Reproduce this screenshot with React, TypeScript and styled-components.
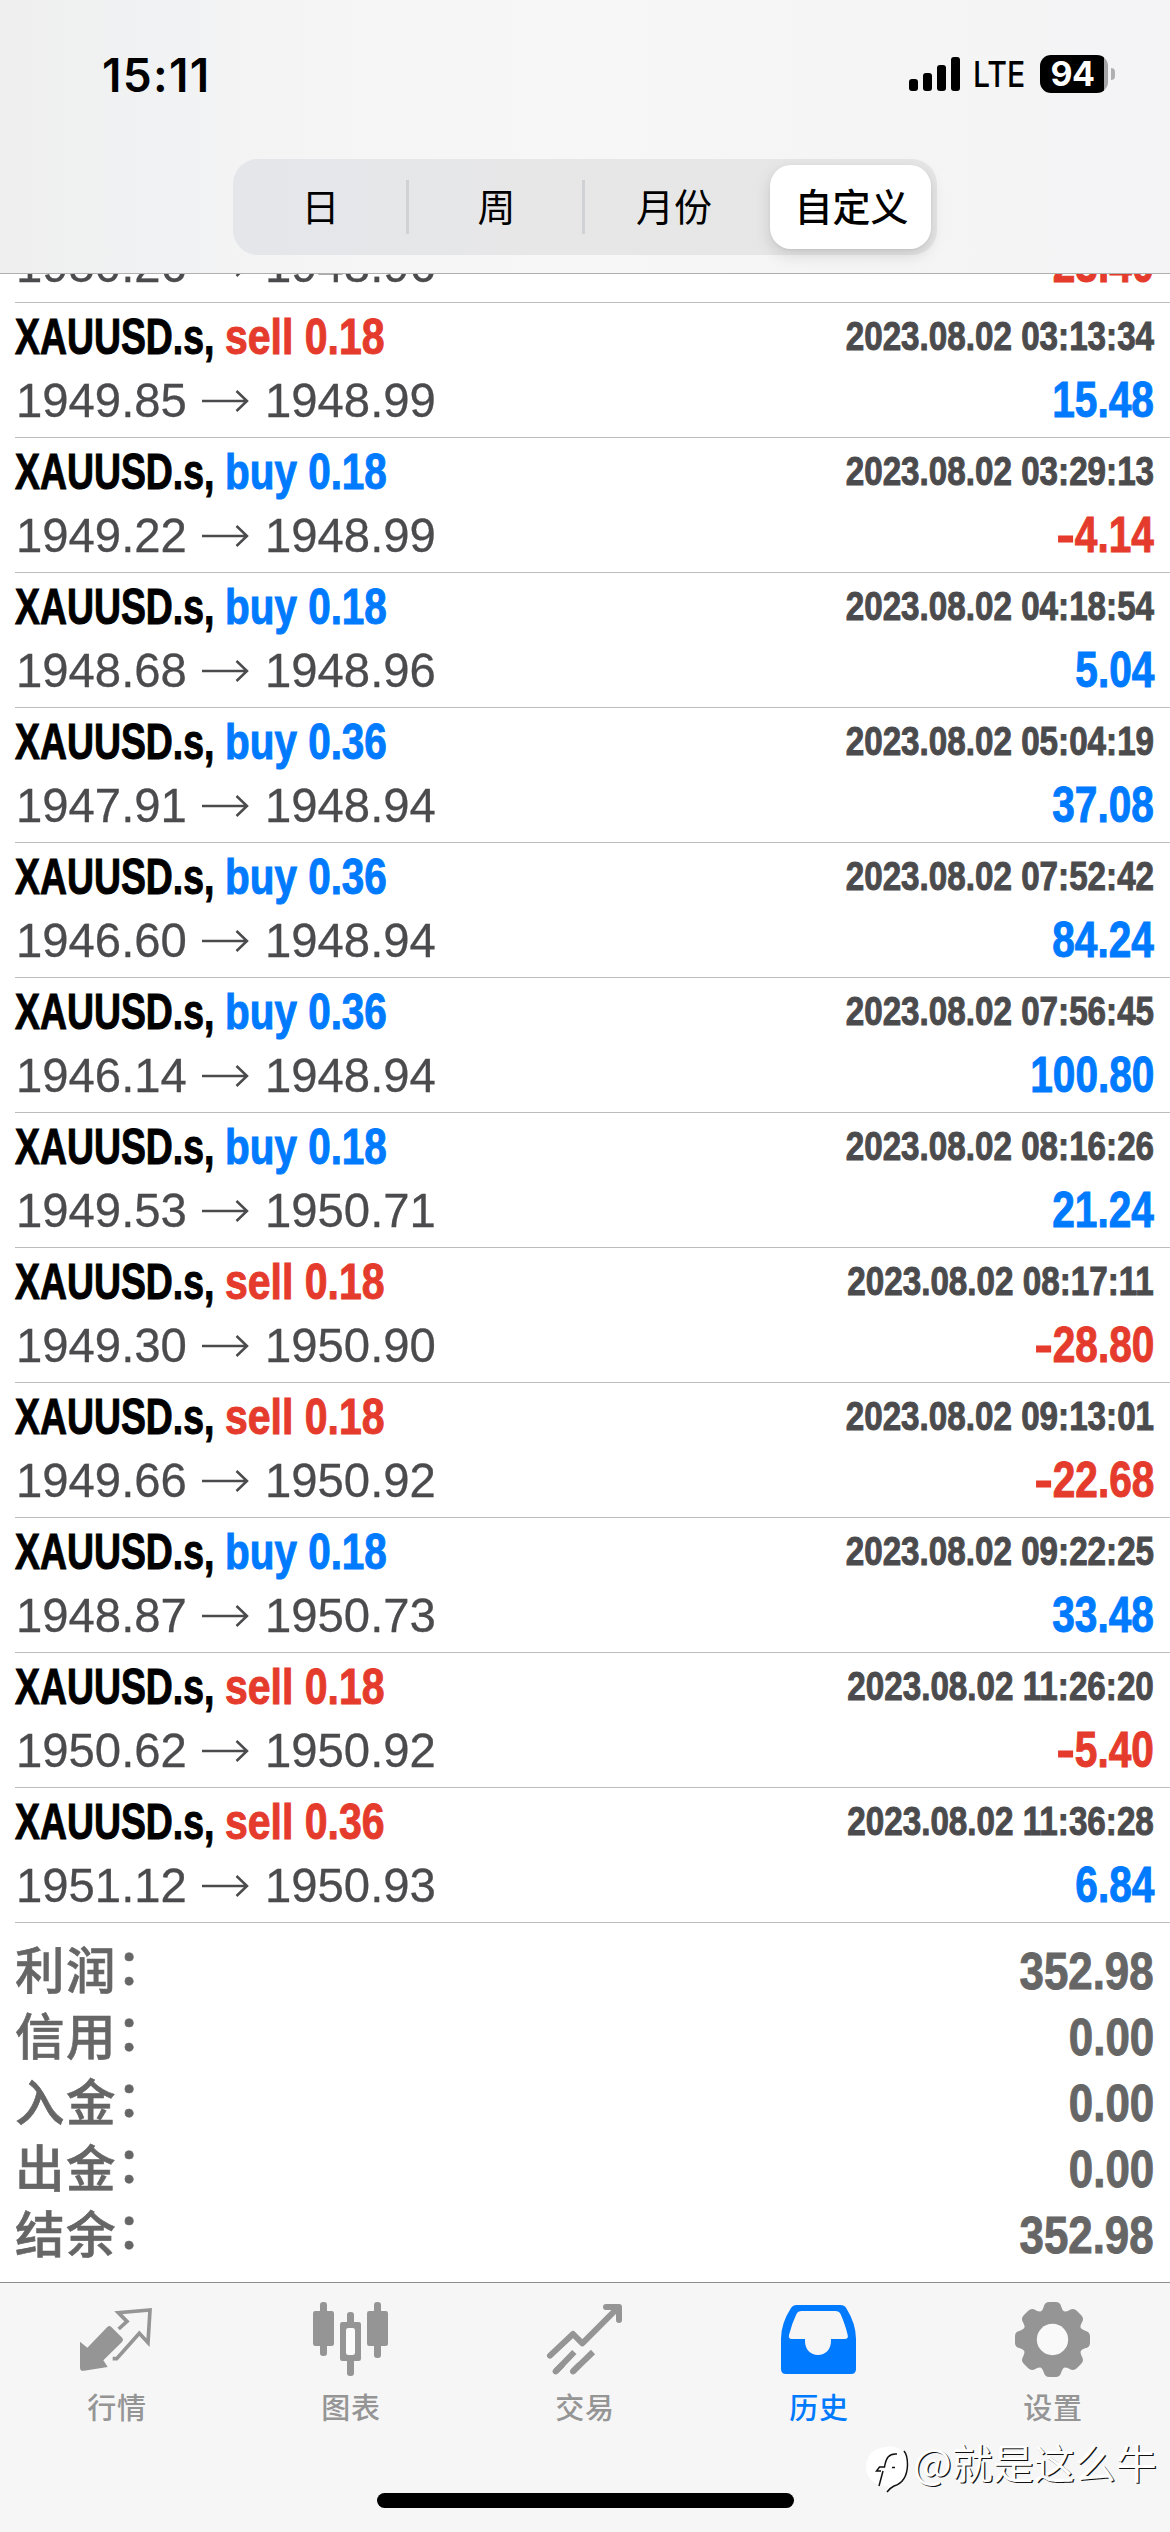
import React from 'react';
import styled, { createGlobalStyle } from 'styled-components';

const BLUE = '#007aff';
const RED = '#e53b2c';
const LATIN = '"Liberation Sans", Arial, "Noto Sans CJK SC", sans-serif';
const CJK = '"Noto Sans CJK SC", "Liberation Sans", sans-serif';

const Global = createGlobalStyle`
  html, body { margin: 0; padding: 0; background: #fff; }
  * { box-sizing: border-box; }
`;

const Screen = styled.div`
  position: relative;
  display: flex;
  flex-direction: column;
  width: 1170px;
  height: 2532px;
  overflow: hidden;
  background: #fff;
  font-family: ${LATIN};
`;

const Header = styled.header`
  flex: none;
  height: 274px;
  display: flex;
  flex-direction: column;
  align-items: center;
  border-bottom: 1px solid #b0b0b1;
  background: linear-gradient(90deg, #efefef 0%, #f1f2f3 14%, #f6f5f6 28%, #f7f7f7 50%, #f5f5f5 70%, #f4f4f6 100%);
`;

const StatusBar = styled.div`
  align-self: stretch;
  height: 159px;
  display: flex;
  justify-content: space-between;
  align-items: flex-start;
  padding: 53px 55px 0 102px;
`;

const Clock = styled.div`
  font: 600 46px/44px Inter, sans-serif;
  letter-spacing: 1.3px;
  color: #000;
`;

const StatusIcons = styled.div`
  display: flex;
  align-items: center;
  height: 42px;
`;

const Network = styled.div`
  width: 67px;
  margin-left: 13px;
  font: 500 36px/42px Inter, sans-serif;
  transform: scaleX(0.84);
  transform-origin: left;
`;

const Battery = styled.div`
  width: 68px;
  height: 38px;
  border-radius: 11px;
  background: linear-gradient(90deg, #000 64px, #a6a6a8 64px);
  color: #fff;
  font: 700 34px/38px Inter, sans-serif;
  letter-spacing: -0.5px;
  text-align: center;
  padding-right: 3px;
`;

const BatteryCap = styled.div`
  width: 4px;
  height: 12px;
  margin-left: 3px;
  border-radius: 0 4px 4px 0;
  background: #b0b0b2;
`;

const Segmented = styled.div`
  display: grid;
  grid-template-columns: repeat(4, 1fr);
  align-items: center;
  width: 704px;
  height: 96px;
  border-radius: 25px;
  background: linear-gradient(90deg, #e4e6ea, #e7e7e8 40%, #e6e6e6);
`;

const Segment = styled.div<{ $active?: boolean; $divider?: boolean }>`
  display: flex;
  align-items: center;
  justify-content: center;
  height: ${p => (p.$active ? 84 : 54)}px;
  margin: ${p => (p.$active ? '0 6px 0 9px' : '0')};
  padding: 0 0 6px 2px;
  border-right: ${p => (p.$divider ? '3px solid #d0d1d4' : '0')};
  border-radius: ${p => (p.$active ? 21 : 0)}px;
  background: ${p => (p.$active ? '#fff' : 'transparent')};
  box-shadow: ${p => (p.$active ? '0 6px 16px rgba(0,0,0,.13), 0 1px 3px rgba(0,0,0,.06)' : 'none')};
  font-family: ${CJK};
  font-size: 38px;
  font-weight: ${p => (p.$active ? 500 : 400)};
  color: #000;
`;

const History = styled.main`
  flex: 1;
  min-height: 0;
  overflow: hidden;
  display: flex;
  flex-direction: column;
  justify-content: flex-end;
`;

const DealRow = styled.div<{ $partial?: boolean }>`
  flex: none;
  height: ${p => (p.$partial ? 69 : 135)}px;
  margin-left: 15px;
  padding: ${p => (p.$partial ? 0 : 2)}px 16px 0 0;
  border-bottom: 1px solid #bcbcbe;
`;

const Line = styled.div<{ $h: number }>`
  display: flex;
  justify-content: space-between;
  height: ${p => p.$h}px;
  line-height: ${p => p.$h}px;
`;

const Left = styled.div`
  display: flex;
  align-items: center;
`;

const Condensed = styled.span<{ $x: number; $size: number; $color: string; $end?: boolean; $lh?: number }>`
  display: block;
  white-space: pre;
  font-size: ${p => p.$size}px;
  font-weight: 700;
  line-height: ${p => (p.$lh ? `${p.$lh}px` : 'inherit')};
  color: ${p => p.$color};
  -webkit-text-stroke: 1px ${p => p.$color};
  transform: scaleX(${p => p.$x});
  transform-origin: ${p => (p.$end ? 'right' : 'left')} center;
`;

const Minus = styled.span`
  display: inline-block;
  transform: scaleX(1.35);
  transform-origin: right center;
`;

const SymbolName = styled.div`
  width: 210px;
`;

const Price = styled.span`
  width: 186px;
  padding-left: 1px;
  font-size: 49px;
  color: #4b4b4d;
  -webkit-text-stroke: 0.3px #4b4b4d;
  transform: scaleX(0.965);
  transform-origin: left center;
`;

const Arrow = styled.svg`
  width: 48px;
  height: 24px;
  margin: 2px 14px 0 1px;
`;

const Summary = styled.section`
  flex: none;
  height: 359px;
  padding: 15px 16px 0 15px;
`;

const SummaryRow = styled.div`
  display: flex;
  justify-content: space-between;
  height: 66px;
  line-height: 66px;
`;

const SummaryLabel = styled.span`
  height: 66px;
  line-height: 60px;
  font-family: ${CJK};
  font-size: 49.5px;
  font-weight: 500;
  letter-spacing: 1.4px;
  color: #666;
  -webkit-text-stroke: 0.6px #666;
`;

const Colon = styled.span`
  display: inline-block;
  transform: translateY(-4px);
`;

const TabBar = styled.nav`
  flex: none;
  height: 250px;
  display: flex;
  flex-direction: column;
  align-items: center;
  border-top: 1px solid #8e8e90;
  background: #f6f6f6;
`;

const Tabs = styled.div`
  display: grid;
  grid-template-columns: repeat(5, 234px);
  height: 210px;
`;

const Tab = styled.div<{ $active?: boolean }>`
  display: flex;
  flex-direction: column;
  align-items: center;
  padding-top: 17px;
  color: ${p => (p.$active ? BLUE : '#959595')};
  font: 500 29px/40px ${CJK};
  letter-spacing: 0.8px;
`;

const TabIcon = styled.svg`
  width: 82px;
  height: 80px;
  margin-bottom: 6px;
`;

const HomeIndicator = styled.div`
  width: 417px;
  height: 15px;
  border-radius: 8px;
  background: #000;
`;

const Watermark = styled.div`
  position: absolute;
  left: 864px;
  top: 2440px;
  display: flex;
  height: 54px;
  font: 400 41px/42px ${CJK};
  color: #fff;
  text-shadow: 1.2px 1.2px 0 #111;
  white-space: nowrap;
`;

const WatermarkLogo = styled.svg`
  width: 48px;
  height: 54px;
  margin-right: 1px;
`;

type Deal = {
  side?: 'buy' | 'sell';
  lot?: string;
  time?: string;
  open: string;
  close: string;
  profit: string;
};

// The first deal has scrolled under the header, only its price line remains.
const deals: Deal[] = [
  { open: '1950.26', close: '1948.96', profit: '-23.40' },
  { side: 'sell', lot: '0.18', open: '1949.85', close: '1948.99', time: '2023.08.02 03:13:34', profit: '15.48' },
  { side: 'buy', lot: '0.18', open: '1949.22', close: '1948.99', time: '2023.08.02 03:29:13', profit: '-4.14' },
  { side: 'buy', lot: '0.18', open: '1948.68', close: '1948.96', time: '2023.08.02 04:18:54', profit: '5.04' },
  { side: 'buy', lot: '0.36', open: '1947.91', close: '1948.94', time: '2023.08.02 05:04:19', profit: '37.08' },
  { side: 'buy', lot: '0.36', open: '1946.60', close: '1948.94', time: '2023.08.02 07:52:42', profit: '84.24' },
  { side: 'buy', lot: '0.36', open: '1946.14', close: '1948.94', time: '2023.08.02 07:56:45', profit: '100.80' },
  { side: 'buy', lot: '0.18', open: '1949.53', close: '1950.71', time: '2023.08.02 08:16:26', profit: '21.24' },
  { side: 'sell', lot: '0.18', open: '1949.30', close: '1950.90', time: '2023.08.02 08:17:11', profit: '-28.80' },
  { side: 'sell', lot: '0.18', open: '1949.66', close: '1950.92', time: '2023.08.02 09:13:01', profit: '-22.68' },
  { side: 'buy', lot: '0.18', open: '1948.87', close: '1950.73', time: '2023.08.02 09:22:25', profit: '33.48' },
  { side: 'sell', lot: '0.18', open: '1950.62', close: '1950.92', time: '2023.08.02 11:26:20', profit: '-5.40' },
  { side: 'sell', lot: '0.36', open: '1951.12', close: '1950.93', time: '2023.08.02 11:36:28', profit: '6.84' },
];

const totals = [
  ['利润', '352.98'],
  ['信用', '0.00'],
  ['入金', '0.00'],
  ['出金', '0.00'],
  ['结余', '352.98'],
];

function DealItem({ deal }: { deal: Deal }) {
  const loss = deal.profit.startsWith('-');
  return (
    <DealRow $partial={!deal.side}>
      {deal.side && (
        <Line $h={64}>
          <Left>
            <SymbolName>
              <Condensed $x={0.755} $size={49.5} $color="#000">XAUUSD.s,</Condensed>
            </SymbolName>
            <Condensed
              $x={deal.side === 'buy' ? 0.817 : 0.828}
              $size={49.5}
              $color={deal.side === 'buy' ? BLUE : RED}
            >
              {`${deal.side} ${deal.lot}`}
            </Condensed>
          </Left>
          <Condensed $x={0.82} $size={40.5} $color="#4b4b4d" $lh={62} $end>{deal.time}</Condensed>
        </Line>
      )}
      <Line $h={62}>
        <Left>
          <Price>{deal.open}</Price>
          <Arrow viewBox="0 0 48 24" fill="none" stroke="#4b4b4d" strokeWidth="2.5">
            <path d="M0 12H45M34.5 2L45 12L34.5 22" />
          </Arrow>
          <Price>{deal.close}</Price>
        </Left>
        <Condensed $x={0.82} $size={49.5} $color={loss ? RED : BLUE} $end>
          {loss && <Minus>-</Minus>}
          {deal.profit.replace('-', '')}
        </Condensed>
      </Line>
    </DealRow>
  );
}

const gearTeeth = [0, 45, 90, 135, 180, 225, 270, 315];

export default function App() {
  return (
    <Screen>
      <Global />
      <Header>
        <StatusBar>
          <Clock>15:11</Clock>
          <StatusIcons>
            <svg width="51" height="34" viewBox="0 0 51 34">
              <rect x="0" y="22" width="9" height="12" rx="3" />
              <rect x="14" y="16" width="9" height="18" rx="3" />
              <rect x="28" y="8" width="9" height="26" rx="3" />
              <rect x="42" y="0" width="9" height="34" rx="3" />
            </svg>
            <Network>LTE</Network>
            <Battery>94</Battery>
            <BatteryCap />
          </StatusIcons>
        </StatusBar>
        <Segmented>
          <Segment $divider>日</Segment>
          <Segment $divider>周</Segment>
          <Segment>月份</Segment>
          <Segment $active>自定义</Segment>
        </Segmented>
      </Header>

      <History>
        {deals.map(d => <DealItem key={d.time ?? d.open} deal={d} />)}
        <Summary>
          {totals.map(([label, value]) => (
            <SummaryRow key={label}>
              <SummaryLabel>{label}<Colon>：</Colon></SummaryLabel>
              <Condensed $x={0.835} $size={52.5} $color="#666" $end>{value}</Condensed>
            </SummaryRow>
          ))}
        </Summary>
      </History>

      <TabBar>
        <Tabs>
          <Tab>
            <TabIcon viewBox="228 90 246 240" fill="currentColor">
              <path d="M240 215L262 233L322 171Q328 165 334 171L367 204Q372 210 366 216L310 271L323 291L252 302Q240 304 240 293Z" />
              <path d="M356 177L381 154L355 128L450 120L444 218L418 190L350 266H338" fill="none" stroke="currentColor" strokeWidth="11" />
            </TabIcon>
            行情
          </Tab>
          <Tab>
            <TabIcon viewBox="930 90 246 240" fill="currentColor">
              <rect x="960" y="96" width="21" height="162" rx="9" />
              <rect x="939" y="123" width="63" height="105" rx="7" />
              <rect x="1122" y="96" width="21" height="168" rx="9" />
              <rect x="1101" y="123" width="63" height="105" rx="7" />
              <rect x="1041" y="126" width="21" height="60" rx="9" />
              <rect x="1041" y="255" width="21" height="63" rx="9" />
              <rect x="1020" y="156" width="63" height="117" rx="7" />
              <rect x="1038" y="174" width="27" height="81" rx="7" fill="#fbfbfb" />
            </TabIcon>
            图表
          </Tab>
          <Tab>
            <TabIcon viewBox="372 90 246 240" fill="none" stroke="currentColor" strokeWidth="18" strokeLinecap="round">
              <path d="M390 257L459 192L487 220L594 113" strokeLinejoin="round" />
              <path d="M558 111H597V150" strokeLinejoin="round" />
              <path d="M407 304L425 286M459 304L477 286" />
              <path d="M407 304L463 246M459 304L519 246" strokeLinecap="butt" />
            </TabIcon>
            交易
          </Tab>
          <Tab $active>
            <TabIcon viewBox="-6 90 246 240" fill="currentColor">
              <path
                fillRule="evenodd"
                d="M50 105H181Q193 105 199 115Q228 162 228 207V297Q228 312 213 312H18Q3 312 3 297V207Q3 160 33 114Q39 105 50 105ZM65 123Q54 123 49 133Q36 160 27 195Q24 207 36 207H75V213C75 239 92 255 114 255C136 255 153 239 153 213V207H194Q206 207 203 195Q197 168 182 133Q177 123 166 123Z"
              />
            </TabIcon>
            历史
          </Tab>
          <Tab>
            <TabIcon viewBox="696 90 246 240" fill="currentColor">
              {gearTeeth.map(a => (
                <path
                  key={a}
                  transform={`rotate(${a} 817.5 208.5)`}
                  d="M781 126Q789 120 791 111Q794 96 808 96H827Q841 96 844 111Q846 120 854 126L840 170H795Z"
                />
              ))}
              <circle cx="817.5" cy="208.5" r="86" />
              <circle cx="817.5" cy="208.5" r="47" fill="#f9f9f9" />
            </TabIcon>
            设置
          </Tab>
        </Tabs>
        <HomeIndicator />
      </TabBar>

      <Watermark>
        <WatermarkLogo viewBox="0 0 48 54">
          <path d="M22 7C34 5 43 11 43 24C43 38 37 44 28 46L23 52L24 46C10 46 2 38 2 27C2 16 9 8 22 7Z" fill="#fff" />
          <path d="M40 11Q43.5 15 43.5 25Q43 42 30 46Q26 48 23 52M33 14C25 13 22 18 20.5 27H15.5L12.5 31H17M19 31L15 46M28 27.500H31" fill="none" stroke="#111" strokeWidth="1.5" />
        </WatermarkLogo>
        @就是这么牛
      </Watermark>
    </Screen>
  );
}
